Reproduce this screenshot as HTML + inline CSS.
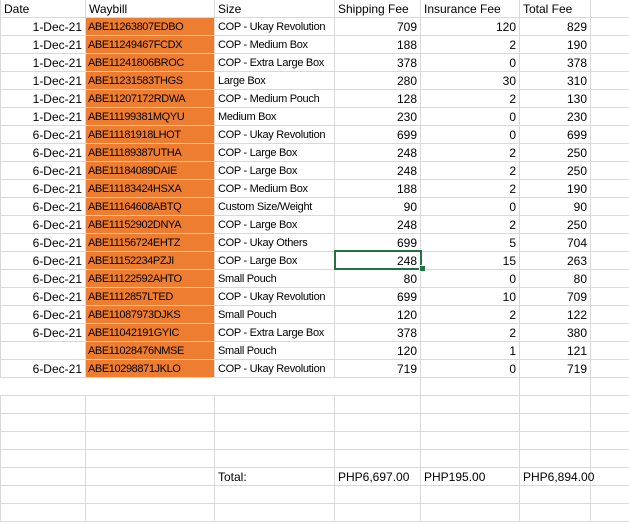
<!DOCTYPE html>
<html><head><meta charset="utf-8"><style>
body{margin:0;width:629px;height:515px;overflow:hidden;background:#fff;font-family:"Liberation Sans",sans-serif;font-size:12px;color:#000}
table{border-collapse:collapse;table-layout:fixed;position:absolute;left:0;top:-1px;width:629px}
td{height:15px;border:1px solid #d9d9d9;padding:2px 3px 0 3px;white-space:nowrap;overflow:hidden;line-height:15px}
td:last-child{border-right-color:#fff}
.r{text-align:right}
.w{background:#ed7d31;font-size:11px;letter-spacing:-0.4px;padding-left:2px}
.s{font-size:11px;letter-spacing:-0.3px}
.nb td.a,.nb td.b,.nb td.c{border-left-color:#fff;border-right-color:#fff}
.sel{position:absolute;left:334px;top:250px;width:84px;height:16px;border:2px solid #217346}
.hd{position:absolute;left:419px;top:265px;width:5px;height:5px;background:#217346;border:1px solid #fff}
.ov{overflow:visible}
</style></head><body>
<table>
<colgroup><col style="width:85px"><col style="width:129px"><col style="width:120px"><col style="width:86px"><col style="width:99px"><col style="width:71px"><col style="width:39px"></colgroup>
<tr><td>Date</td><td>Waybill</td><td>Size</td><td>Shipping Fee</td><td>Insurance Fee</td><td>Total Fee</td><td></td></tr>
<tr><td class="r">1-Dec-21</td><td class="w">ABE11263807EDBO</td><td class="s">COP - Ukay Revolution</td><td class="r">709</td><td class="r">120</td><td class="r">829</td><td></td></tr>
<tr><td class="r">1-Dec-21</td><td class="w">ABE11249467FCDX</td><td class="s">COP - Medium Box</td><td class="r">188</td><td class="r">2</td><td class="r">190</td><td></td></tr>
<tr><td class="r">1-Dec-21</td><td class="w">ABE11241806BROC</td><td class="s">COP - Extra Large Box</td><td class="r">378</td><td class="r">0</td><td class="r">378</td><td></td></tr>
<tr><td class="r">1-Dec-21</td><td class="w">ABE11231583THGS</td><td class="s">Large Box</td><td class="r">280</td><td class="r">30</td><td class="r">310</td><td></td></tr>
<tr><td class="r">1-Dec-21</td><td class="w">ABE11207172RDWA</td><td class="s">COP - Medium Pouch</td><td class="r">128</td><td class="r">2</td><td class="r">130</td><td></td></tr>
<tr><td class="r">1-Dec-21</td><td class="w">ABE11199381MQYU</td><td class="s">Medium Box</td><td class="r">230</td><td class="r">0</td><td class="r">230</td><td></td></tr>
<tr><td class="r">6-Dec-21</td><td class="w">ABE11181918LHOT</td><td class="s">COP - Ukay Revolution</td><td class="r">699</td><td class="r">0</td><td class="r">699</td><td></td></tr>
<tr><td class="r">6-Dec-21</td><td class="w">ABE11189387UTHA</td><td class="s">COP - Large Box</td><td class="r">248</td><td class="r">2</td><td class="r">250</td><td></td></tr>
<tr><td class="r">6-Dec-21</td><td class="w">ABE11184089DAIE</td><td class="s">COP - Large Box</td><td class="r">248</td><td class="r">2</td><td class="r">250</td><td></td></tr>
<tr><td class="r">6-Dec-21</td><td class="w">ABE11183424HSXA</td><td class="s">COP - Medium Box</td><td class="r">188</td><td class="r">2</td><td class="r">190</td><td></td></tr>
<tr><td class="r">6-Dec-21</td><td class="w">ABE11164608ABTQ</td><td class="s">Custom Size/Weight</td><td class="r">90</td><td class="r">0</td><td class="r">90</td><td></td></tr>
<tr><td class="r">6-Dec-21</td><td class="w">ABE11152902DNYA</td><td class="s">COP - Large Box</td><td class="r">248</td><td class="r">2</td><td class="r">250</td><td></td></tr>
<tr><td class="r">6-Dec-21</td><td class="w">ABE11156724EHTZ</td><td class="s">COP - Ukay Others</td><td class="r">699</td><td class="r">5</td><td class="r">704</td><td></td></tr>
<tr><td class="r">6-Dec-21</td><td class="w">ABE11152234PZJI</td><td class="s">COP - Large Box</td><td class="r">248</td><td class="r">15</td><td class="r">263</td><td></td></tr>
<tr><td class="r">6-Dec-21</td><td class="w">ABE11122592AHTO</td><td class="s">Small Pouch</td><td class="r">80</td><td class="r">0</td><td class="r">80</td><td></td></tr>
<tr><td class="r">6-Dec-21</td><td class="w">ABE1112857LTED</td><td class="s">COP - Ukay Revolution</td><td class="r">699</td><td class="r">10</td><td class="r">709</td><td></td></tr>
<tr><td class="r">6-Dec-21</td><td class="w">ABE11087973DJKS</td><td class="s">Small Pouch</td><td class="r">120</td><td class="r">2</td><td class="r">122</td><td></td></tr>
<tr><td class="r">6-Dec-21</td><td class="w">ABE11042191GYIC</td><td class="s">COP - Extra Large Box</td><td class="r">378</td><td class="r">2</td><td class="r">380</td><td></td></tr>
<tr><td class="r"></td><td class="w">ABE11028476NMSE</td><td class="s">Small Pouch</td><td class="r">120</td><td class="r">1</td><td class="r">121</td><td></td></tr>
<tr><td class="r">6-Dec-21</td><td class="w">ABE10298871JKLO</td><td class="s">COP - Ukay Revolution</td><td class="r">719</td><td class="r">0</td><td class="r">719</td><td></td></tr>
<tr class="nb"><td class="a"></td><td class="b"></td><td class="c"></td><td></td><td></td><td></td><td></td></tr>
<tr><td></td><td></td><td></td><td></td><td></td><td></td><td></td></tr>
<tr><td></td><td></td><td></td><td></td><td></td><td></td><td></td></tr>
<tr><td></td><td></td><td></td><td></td><td></td><td></td><td></td></tr>
<tr><td></td><td></td><td></td><td></td><td></td><td></td><td></td></tr>
<tr><td></td><td></td><td>Total:</td><td>PHP6,697.00</td><td>PHP195.00</td><td class="ov">PHP6,894.00</td><td></td></tr>
<tr><td></td><td></td><td></td><td></td><td></td><td></td><td></td></tr>
<tr><td></td><td></td><td></td><td></td><td></td><td></td><td></td></tr>
</table>
<div class="sel"></div><div class="hd"></div>
</body></html>
